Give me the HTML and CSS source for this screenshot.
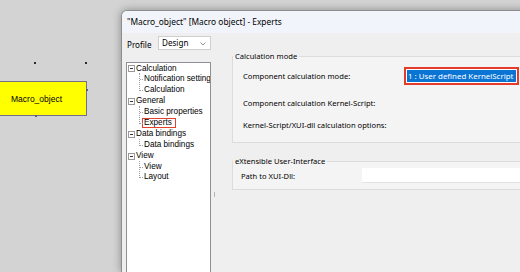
FILE: index.html
```html
<!DOCTYPE html>
<html>
  <head>
    <meta charset="utf-8">
    <link rel="stylesheet" href="styles.css">
    <title>Macro_object - Experts</title>
  </head>
  <body>
    <div class="canvas">
      <span class="dot dot-a"></span>
      <span class="dot dot-b"></span>
      <div class="block">
        Macro_object
        <span class="handle handle-r"></span>
        <span class="handle handle-b"></span>
      </div>
    </div>

    <div class="dialog">
      <div class="titlebar">"Macro_object" [Macro object] - Experts</div>
      <div class="dialog-body">
        <div class="sidebar">
          <div class="profile">
            <label>Profile</label>
            <div class="select">
              Design
              <svg class="chevron" width="6" height="4" viewBox="0 0 6 4"><polyline points="0.5,0.5 3,3 5.5,0.5" fill="none" stroke="#777" stroke-width="0.8"/></svg>
            </div>
          </div>
          <div class="tree">
            <div class="branch"><span class="toggle"></span>Calculation</div>
            <div class="children">
              <div class="leaf">Notification settings</div>
              <div class="leaf">Calculation</div>
            </div>
            <div class="branch"><span class="toggle"></span>General</div>
            <div class="children">
              <div class="leaf">Basic properties</div>
              <div class="leaf"><span class="mark">Experts</span></div>
            </div>
            <div class="branch"><span class="toggle"></span>Data bindings</div>
            <div class="children">
              <div class="leaf">Data bindings</div>
            </div>
            <div class="branch"><span class="toggle"></span>View</div>
            <div class="children">
              <div class="leaf">View</div>
              <div class="leaf">Layout</div>
            </div>
          </div>
        </div>

        <div class="splitter"><span class="grip"></span></div>

        <div class="content">
          <fieldset class="group group-calc">
            <legend>Calculation mode</legend>
            <div class="row row-combo">
              <div class="label">Component calculation mode:</div>
              <div class="combo"><div class="combo-sel">1 : User defined KernelScript</div></div>
            </div>
            <div class="row row-script">
              <div class="label">Component calculation Kernel-Script:</div>
            </div>
            <div class="row row-options">
              <div class="label">Kernel-Script/XUI-dll calculation options:</div>
            </div>
          </fieldset>

          <fieldset class="group group-xui">
            <legend>eXtensible User-Interface</legend>
            <div class="row row-path">
              <div class="label">Path to XUI-Dll:</div>
              <div class="textbox"></div>
            </div>
          </fieldset>
        </div>
      </div>
    </div>
  </body>
</html>
```

FILE: styles.css
```css
* {
  box-sizing: border-box;
}
body {
  margin: 0;
  width: 520px;
  height: 272px;
  overflow: hidden;
  position: relative;
  background-color: #d3d3d3;
  font-family: "Noto Sans", sans-serif;
  color: #000;
}

/* diagram canvas */
.dot {
  position: absolute;
  width: 2px;
  height: 2px;
  background-color: #2a2a2a;
}
.dot-a {
  left: 34px;
  top: 62px;
}
.dot-b {
  left: 85px;
  top: 62px;
}
.block {
  position: absolute;
  left: -1px;
  top: 81px;
  width: 88px;
  height: 35px;
  display: flex;
  align-items: center;
  padding-left: 11px;
  background-color: #ffff00;
  border: 1px solid #70708a;
  font-family: "Liberation Sans", sans-serif;
  font-size: 8.5px;
  color: #000;
}
.handle {
  position: absolute;
  width: 2px;
  height: 2px;
  background-color: #5a5a8c;
}
.handle-r {
  left: 86px;
  top: 7px;
}
.handle-b {
  left: 35px;
  bottom: -2px;
}

/* dialog window */
.dialog {
  position: absolute;
  left: 121px;
  top: 10px;
  width: 420px;
  height: 262px;
  display: flex;
  flex-direction: column;
  overflow: hidden;
  background-color: #efefef;
  border: 1px solid #8e8e8e;
  border-bottom: 0;
  border-radius: 6px 0 0 0;
  box-shadow: 0 0 8px rgba(0, 0, 0, .35);
}
.titlebar {
  flex: none;
  height: 22px;
  padding-left: 5px;
  line-height: 22px;
  font-size: 8.4px;
  background-color: #f1f4fb;
  color: #000;
  white-space: nowrap;
}
.dialog-body {
  flex: 1;
  display: flex;
  min-height: 0;
}
.sidebar {
  flex: none;
  width: 89px;
  display: flex;
  flex-direction: column;
  padding: 3px 0 0 4px;
}
.profile {
  display: flex;
  align-items: center;
  height: 14px;
  font-size: 8.1px;
}
.profile label {
  margin-left: 1px;
  padding-top: 2px;
}
.select {
  position: relative;
  margin-left: auto;
  width: 53px;
  height: 14px;
  padding-left: 3px;
  line-height: 12px;
  font-size: 8.1px;
  background-color: #fff;
  border: 1px solid #cfcfcf;
}
.chevron {
  position: absolute;
  right: 4px;
  top: 5px;
}
.tree {
  flex: 1;
  margin-top: 12px;
  padding-top: 0.5px;
  overflow: hidden;
  white-space: nowrap;
  background-color: #fff;
  border: 1px solid #8d9096;
  border-bottom: 0;
  font-family: "Liberation Sans", sans-serif;
  font-size: 8.2px;
  line-height: 10.9px;
  color: #000;
}
.branch {
  display: flex;
  align-items: center;
  height: 10.9px;
  padding-left: 1px;
}
.toggle {
  position: relative;
  width: 7px;
  height: 7px;
  margin-right: 1px;
  border: 1px solid #9a9a9a;
}
.toggle::after {
  content: "";
  position: absolute;
  left: 1px;
  top: 2px;
  width: 3px;
  height: 1px;
  background-color: #333;
}
.leaf {
  position: relative;
  height: 10.9px;
  padding-left: 17px;
}
.leaf::before {
  content: "";
  position: absolute;
  left: 12px;
  top: -1px;
  height: calc(100% + 1px);
  border-left: 1px dotted #a0a0a0;
}
.leaf:last-child::before {
  height: 7px;
}
.leaf::after {
  content: "";
  position: absolute;
  left: 13px;
  top: 5px;
  width: 3px;
  border-top: 1px dotted #a0a0a0;
}
.mark {
  display: inline-block;
  height: 10px;
  margin-left: -2px;
  padding: 0 3px 0 1px;
  line-height: 8.5px;
  border: 1px solid #e4402c;
}

.splitter {
  flex: none;
  width: 7px;
  padding: 159px 0 0 3px;
}
.grip {
  display: block;
  width: 1px;
  height: 5px;
  background-color: #b5b5b5;
}

/* right panel */
.content {
  flex: 1;
  padding: 17px 0 0 14px;
  font-size: 7.6px;
  color: #000;
}
.group {
  margin: 0;
  padding: 0 0 10px 0;
  min-width: 0;
  background-color: #f4f4f4;
  border: 1px solid #dcdcdc;
}
.group legend {
  padding: 0 2px;
  line-height: 12px;
}
.row {
  display: flex;
  align-items: center;
  white-space: nowrap;
}
.group-calc .row {
  margin-left: 10px;
}
.group-calc .label {
  width: 161px;
}
.row-combo {
  height: 18px;
  margin-top: 5px;
}
.row-script {
  height: 14px;
  margin-top: 11px;
}
.row-options {
  height: 14px;
  margin-top: 8px;
}
.combo {
  width: 115px;
  height: 18px;
  padding: 1px;
  background-color: #fff;
  border: 2px solid #e43b2c;
}
.combo-sel {
  height: 100%;
  padding-left: 1px;
  line-height: 12px;
  font-size: 7.9px;
  background-color: #0a74d4;
  color: #fff;
}
.group-xui {
  margin-top: 12px;
  padding-bottom: 6px;
}
.row-path {
  height: 15px;
  margin: 1px 0 0 8px;
}
.group-xui .label {
  width: 121px;
}
.textbox {
  flex: 1;
  height: 15px;
  background-color: #fff;
  border-bottom: 1px solid #e3e3e3;
}
```
